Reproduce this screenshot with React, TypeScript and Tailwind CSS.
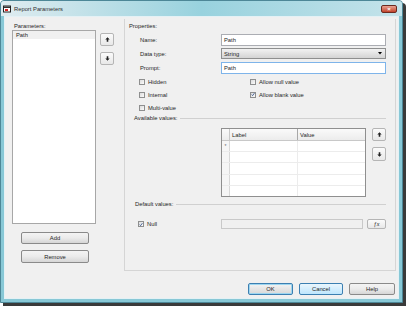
import React from "react";

const font = "font-['Liberation_Sans',Arial,sans-serif] text-[5.8px] leading-[8px] text-[#1e1e1e]";

function Btn({ label, className = "" }: { label: string; className?: string }) {
  return (
    <div
      className={
        "flex items-center justify-center rounded-[2px] border border-[#8a8a8a] bg-linear-to-b from-[#f4f4f4] via-[#ebebeb] to-[#d6d6d6] " +
        className
      }
    >
      {label}
    </div>
  );
}

function Arrow({ down = false }: { down?: boolean }) {
  return (
    <svg width="5" height="5" viewBox="0 0 5 5" className={down ? "rotate-180" : ""}>
      <path d="M2.5 0.3 L4.7 2.6 L3.3 2.6 L3.3 4.7 L1.7 4.7 L1.7 2.6 L0.3 2.6 Z" fill="#222" />
    </svg>
  );
}

function ArrowBtn({ down = false, className = "" }: { down?: boolean; className?: string }) {
  return (
    <div
      className={
        "flex items-center justify-center rounded-[2px] border border-[#b5b5b5] bg-linear-to-b from-[#fbfbfb] to-[#e8e8e8] " +
        className
      }
    >
      <Arrow down={down} />
    </div>
  );
}

function Check({ checked = false, label }: { checked?: boolean; label: string }) {
  return (
    <div className="flex items-center">
      <div className="flex h-[6px] w-[6px] items-center justify-center border border-[#8e8f8f] bg-linear-to-br from-[#dcdcdc] to-[#fbfbfb]">
        {checked && (
          <svg width="5" height="5" viewBox="0 0 5 5">
            <path d="M0.8 2.6 L2 3.9 L4.3 0.8" stroke="#2a4a8a" strokeWidth="1" fill="none" />
          </svg>
        )}
      </div>
      <span className="ml-[3px]">{label}</span>
    </div>
  );
}

export default function App() {
  const rows = [0, 1, 2, 3, 4];
  return (
    <div className={"h-[309px] w-[409px] overflow-hidden bg-white " + font}>
      <div className="flex h-[303px] w-[403px] flex-col overflow-hidden rounded-t-[4px] border border-[#4d8797] bg-[#88c8d6] shadow-[3px_3px_0_#3a3a3a]">
        {/* title bar */}
        <div className="flex h-[15px] items-center bg-linear-to-r from-[#dfecf0] via-[#98d2de] to-[#c4e3ea] pl-[2px] pr-[5px]">
          <svg width="8" height="8" viewBox="0 0 8 8">
            <rect x="0.5" y="1" width="7" height="6" fill="#fff" stroke="#222" />
            <rect x="1" y="1.5" width="6" height="1.5" fill="#333" />
            <rect x="2" y="4" width="3" height="2" fill="#d22" />
          </svg>
          <span className="ml-[3px] text-[#303030]">Report Parameters</span>
          <div className="flex-1" />
          <div className="flex h-[8px] w-[16px] items-center justify-center rounded-[2px] border border-[#6b2a20] bg-linear-to-b from-[#e8a292] to-[#c0412a] text-[6px] font-bold leading-none text-white">
            ×
          </div>
        </div>

        {/* client area */}
        <div className="mx-[3px] mb-[3px] flex flex-1 flex-col border border-[#e4f1f5] bg-[#f0f0f0]">
          <div className="flex">
            {/* parameters list */}
            <div className="ml-[7px] flex w-[84px] flex-col pt-[5px]">
              <span className="pl-[2px]">Parameters:</span>
              <div className="h-[194px] border border-[#a7a7a7] bg-white">
                <div className="bg-[#f0f0f0] pl-[3px] leading-[8px]">Path</div>
              </div>
              <Btn label="Add" className="ml-[9px] mt-[8px] h-[12px] w-[68px]" />
              <Btn label="Remove" className="ml-[9px] mt-[6px] h-[13px] w-[68px]" />
            </div>

            {/* up / down */}
            <div className="ml-[4px] flex flex-col pt-[16px]">
              <ArrowBtn className="h-[13px] w-[14px]" />
              <ArrowBtn down className="mt-[6px] h-[13px] w-[14px]" />
            </div>

            {/* properties panel */}
            <div className="ml-[10px] mt-[2px] flex h-[252px] w-[272px] flex-col border-x border-b border-[#d5d5d5]">
              <span className="mt-[3px] pl-[4px]">Properties:</span>

              <div className="mt-[4px] flex h-[12px] items-center pl-[15px]">
                <span className="w-[81px]">Name:</span>
                <div className="flex h-[12px] w-[165px] items-center border border-[#abadb3] bg-white pl-[2px]">Path</div>
              </div>
              <div className="mt-[2px] flex h-[11px] items-center pl-[15px]">
                <span className="w-[81px]">Data type:</span>
                <div className="flex h-[11px] w-[165px] items-center border border-[#8e8f8f] bg-linear-to-b from-[#f2f2f2] to-[#d4d4d4] pl-[2px] pr-[3px]">
                  <span className="flex-1">String</span>
                  <svg width="4" height="3" viewBox="0 0 4 3">
                    <path d="M0 0 L4 0 L2 2.5 Z" fill="#000" />
                  </svg>
                </div>
              </div>
              <div className="mt-[3px] flex h-[12px] items-center pl-[15px]">
                <span className="w-[81px]">Prompt:</span>
                <div className="flex h-[12px] w-[165px] items-center border border-[#7eb4ea] bg-white pl-[2px]">Path</div>
              </div>

              <div className="mt-[1px] flex h-[13px] items-center pl-[14px]">
                <div className="w-[111px]">
                  <Check label="Hidden" />
                </div>
                <Check label="Allow null value" />
              </div>
              <div className="flex h-[13px] items-center pl-[14px]">
                <div className="w-[111px]">
                  <Check label="Internal" />
                </div>
                <Check checked label="Allow blank value" />
              </div>
              <div className="flex h-[13px] items-center pl-[14px]">
                <Check label="Multi-value" />
              </div>

              <div className="flex h-[8px] items-center pl-[9px] pr-[9px]">
                <span>Available values:</span>
                <div className="ml-[3px] h-px flex-1 bg-[#d0d0d0]" />
              </div>

              {/* grid */}
              <div className="ml-[96px] mt-[6px] flex">
                <div className="flex h-[69px] w-[145px] flex-col border border-[#8f8f8f] bg-white">
                  <div className="flex h-[12px] border-b border-[#c8c8c8] bg-linear-to-b from-[#fafafa] to-[#ececec]">
                    <div className="w-[8px] border-r border-[#c8c8c8]" />
                    <div className="flex w-[68px] items-center border-r border-[#a8a8a8] pl-[2px]">Label</div>
                    <div className="flex flex-1 items-center pl-[2px]">Value</div>
                  </div>
                  {rows.map((r) => (
                    <div key={r} className="flex flex-1 border-b border-[#ececec] last:border-b-0">
                      <div className="flex w-[8px] items-center justify-center border-r border-[#d8d8d8] bg-[#f6f6f6] text-[5px] text-[#666]">
                        {r === 0 ? "*" : ""}
                      </div>
                      <div className="w-[68px] border-r border-[#ececec]" />
                      <div className="flex-1" />
                    </div>
                  ))}
                </div>
                <div className="ml-[6px] flex flex-col">
                  <ArrowBtn className="h-[13px] w-[14px]" />
                  <ArrowBtn down className="mt-[6px] h-[14px] w-[14px]" />
                </div>
              </div>

              <div className="mt-[3px] flex h-[8px] items-center pl-[10px] pr-[9px]">
                <span>Default values:</span>
                <div className="ml-[3px] h-px flex-1 bg-[#d0d0d0]" />
              </div>

              <div className="mt-[11px] flex h-[10px] items-center pl-[13px]">
                <div className="w-[83px]">
                  <Check checked label="Null" />
                </div>
                <div className="h-[10px] w-[142px] border border-[#c9c9c9] bg-[#f0f0f0]" />
                <div className="ml-[4px] flex h-[10px] w-[19px] items-center justify-center rounded-[2px] border border-[#b5b5b5] bg-linear-to-b from-[#fbfbfb] to-[#e8e8e8] font-['Liberation_Serif',serif] text-[6px] italic">
                  ƒx
                </div>
              </div>
            </div>
          </div>

          {/* footer */}
          <div className="mt-[12px] flex justify-end pr-[3px]">
            <div className="flex h-[12px] w-[45px] items-center justify-center rounded-[2px] border border-[#3c7fb1] bg-linear-to-b from-[#f3f3f3] to-[#d8d8d8] shadow-[inset_0_0_0_1px_#9ed6f0]">
              OK
            </div>
            <div className="ml-[6px] flex h-[12px] w-[44px] items-center justify-center rounded-[2px] border border-[#3c7fb1] bg-linear-to-b from-[#eaf6fd] to-[#bee6fd]">
              Cancel
            </div>
            <Btn label="Help" className="ml-[6px] h-[12px] w-[46px]" />
          </div>
        </div>
      </div>
    </div>
  );
}
